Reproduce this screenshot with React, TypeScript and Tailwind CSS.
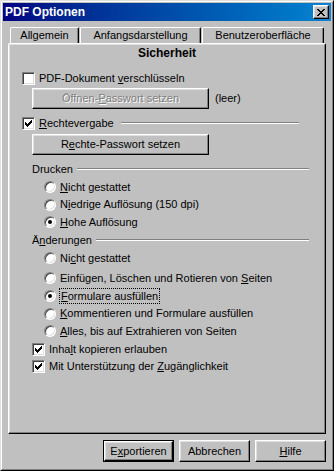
import React from "react";

function Pix({ rows, color }: { rows: string[]; color: string }) {
  const w = rows[0].length;
  const h = rows.length;
  return (
    <svg width={w} height={h} shapeRendering="crispEdges" className="block">
      {rows.flatMap((r, y) =>
        r.split("").map((c, x) =>
          c === "X" ? <rect key={x + "-" + y} x={x} y={y} width="1" height="1" fill={color} /> : null
        )
      )}
    </svg>
  );
}

const CHECK = [
  "......X",
  ".....XX",
  "X...XXX",
  "XX.XXX.",
  "XXXXX..",
  ".XXX...",
  "..X....",
];

const CLOSE = [
  "XX....XX",
  ".XX..XX.",
  "..XXXX..",
  "...XX...",
  "..XXXX..",
  ".XX..XX.",
  "XX....XX",
];

function Check({ checked }: { checked?: boolean }) {
  return (
    <div className="w-[13px] h-[13px] shrink-0 bg-white border border-t-[#808080] border-l-[#808080] border-r-white border-b-white shadow-[inset_1px_1px_0_#404040,inset_-1px_-1px_0_#dfdfdf] flex items-center justify-center">
      {checked && <Pix rows={CHECK} color="#000" />}
    </div>
  );
}

function Radio({ checked }: { checked?: boolean }) {
  return (
    <div className="relative w-[12px] h-[12px] shrink-0 rounded-full bg-white border border-t-[#808080] border-l-[#808080] border-r-white border-b-white shadow-[inset_1px_1px_0_#404040,inset_-1px_-1px_0_#dfdfdf]">
      {checked && <div className="absolute left-[3px] top-[3px] w-[4px] h-[4px] rounded-full bg-black" />}
    </div>
  );
}

function Btn3D({ children, className }: { children: React.ReactNode; className: string }) {
  return (
    <div
      className={
        "flex items-center justify-center bg-[#c0c0c0] border border-t-white border-l-white border-r-black border-b-black shadow-[inset_-1px_-1px_0_#808080,inset_1px_1px_0_#dfdfdf] " +
        className
      }
    >
      {children}
    </div>
  );
}

function U({ children }: { children: React.ReactNode }) {
  return <span className="underline underline-offset-[1px] decoration-1">{children}</span>;
}

function Etched({ className }: { className: string }) {
  return <div className={"h-[2px] border-t border-t-[#808080] border-b border-b-white " + className} />;
}

function RadioRow({ checked, children, className }: { checked?: boolean; children: React.ReactNode; className: string }) {
  return (
    <div className={"flex items-center gap-[4px] pl-[35px] " + className}>
      <Radio checked={checked} />
      <span className="leading-none">{children}</span>
    </div>
  );
}

export default function App() {
  return (
    <div className="w-[334px] h-[471px] bg-[#c0c0c0] font-['Liberation_Sans',Arial,sans-serif] text-[11px] text-black border border-t-[#dfdfdf] border-l-[#dfdfdf] border-r-black border-b-black">
      <div className="w-full h-full border border-t-white border-l-white border-r-[#808080] border-b-[#808080] p-[1px] flex flex-col">
        {/* Title bar */}
        <div className="h-[18px] shrink-0 flex items-center justify-between pl-[2px] pr-[2px] bg-gradient-to-r from-[#000080] to-[#1084d0]">
          <span className="text-white font-bold text-[12px] leading-none">PDF Optionen</span>
          <div className="w-[16px] h-[14px] flex items-center justify-center bg-[#c0c0c0] border border-t-white border-l-white border-r-black border-b-black shadow-[inset_-1px_-1px_0_#808080,inset_1px_1px_0_#dfdfdf]">
            <Pix rows={CLOSE} color="#000" />
          </div>
        </div>

        <div className="flex-1 flex flex-col px-[5px] pt-[6px] pb-[5px]">
          {/* Tab row 1 */}
          <div className="h-[16px] flex gap-[1px] ml-[2px]">
            <div className="w-[69px] flex items-center justify-center rounded-t-[2px] border-t border-l border-r border-t-white border-l-white border-r-black shadow-[inset_-1px_0_0_#808080]">
              Allgemein
            </div>
            <div className="w-[121px] flex items-center justify-center rounded-t-[2px] border-t border-l border-r border-t-white border-l-white border-r-black shadow-[inset_-1px_0_0_#808080]">
              Anfangsdarstellung
            </div>
            <div className="w-[122px] flex items-center justify-center rounded-t-[2px] border-t border-l border-r border-t-white border-l-white border-r-black shadow-[inset_-1px_0_0_#808080]">
              Benutzeroberfläche
            </div>
          </div>

          {/* Panel */}
          <div className="h-[391px] flex flex-col rounded-t-[2px] border border-t-white border-l-white border-r-black border-b-black shadow-[inset_-1px_-1px_0_#808080,inset_1px_1px_0_#dfdfdf]">
            <div className="h-[18px] flex items-center justify-center font-bold text-[12px]">Sicherheit</div>

            <div className="mt-[8px] h-[16px] flex items-center gap-[4px] pl-[13px]">
              <Check />
              <span>
                PDF-Dokument <U>v</U>erschlüsseln
              </span>
            </div>

            <div className="mt-[2px] h-[21px] flex items-center pl-[23px]">
              <Btn3D className="w-[177px] h-[21px]">
                <span className="text-[#808080] [text-shadow:1px_1px_0_#fff]">
                  Öffnen-<U>P</U>asswort setzen
                </span>
              </Btn3D>
              <span className="ml-[6px]">(leer)</span>
            </div>

            <div className="mt-[6px] h-[16px] flex items-center gap-[4px] pl-[13px]">
              <Check checked />
              <span>
                <U>R</U>echtevergabe
              </span>
              <Etched className="flex-1 ml-[3px] mr-[26px]" />
            </div>

            <div className="mt-[3px] h-[21px] flex items-center pl-[23px]">
              <Btn3D className="w-[177px] h-[21px]">
                <span>
                  R<U>e</U>chte-Passwort setzen
                </span>
              </Btn3D>
            </div>

            <div className="mt-[6px] h-[16px] flex items-center pl-[23px]">
              <span>Drucken</span>
              <Etched className="flex-1 ml-[4px] mr-[16px]" />
            </div>

            <RadioRow className="mt-[1px] h-[18px]">
              <U>N</U>icht gestattet
            </RadioRow>
            <RadioRow className="h-[17px]">
              N<U>i</U>edrige Auflösung (150 dpi)
            </RadioRow>
            <RadioRow checked className="h-[18px]">
              <U>H</U>ohe Auflösung
            </RadioRow>

            <div className="h-[18px] flex items-center pl-[23px]">
              <span>
                Ä<U>n</U>derungen
              </span>
              <Etched className="flex-1 ml-[4px] mr-[16px]" />
            </div>

            <RadioRow className="h-[18px]">
              Ni<U>c</U>ht gestattet
            </RadioRow>
            <RadioRow className="mt-[2px] h-[18px]">
              Einfügen, Löschen und Rotieren von <U>S</U>eiten
            </RadioRow>
            <RadioRow checked className="h-[18px]">
              <span className="outline outline-1 outline-dotted outline-black px-[1px] py-[1px]">
                <U>F</U>ormulare ausfüllen
              </span>
            </RadioRow>
            <RadioRow className="h-[17px]">
              <U>K</U>ommentieren und Formulare ausfüllen
            </RadioRow>
            <RadioRow className="h-[18px]">
              <U>A</U>lles, bis auf Extrahieren von Seiten
            </RadioRow>

            <div className="h-[18px] flex items-center gap-[4px] pl-[23px]">
              <Check checked />
              <span>
                Inha<U>l</U>t kopieren erlauben
              </span>
            </div>
            <div className="h-[17px] flex items-center gap-[4px] pl-[23px]">
              <Check checked />
              <span>
                Mit Unterstützung der <U>Z</U>ugänglichkeit
              </span>
            </div>
          </div>

          {/* Buttons */}
          <div className="mt-[6px] h-[22px] flex justify-end gap-[5px]">
            <div className="w-[71px] h-[22px] border border-black">
              <Btn3D className="w-full h-full">
                <span>
                  E<U>x</U>portieren
                </span>
              </Btn3D>
            </div>
            <Btn3D className="w-[71px] h-[22px]">
              <span>Abbrechen</span>
            </Btn3D>
            <Btn3D className="w-[71px] h-[22px]">
              <span>
                <U>H</U>ilfe
              </span>
            </Btn3D>
          </div>
        </div>
      </div>
    </div>
  );
}
